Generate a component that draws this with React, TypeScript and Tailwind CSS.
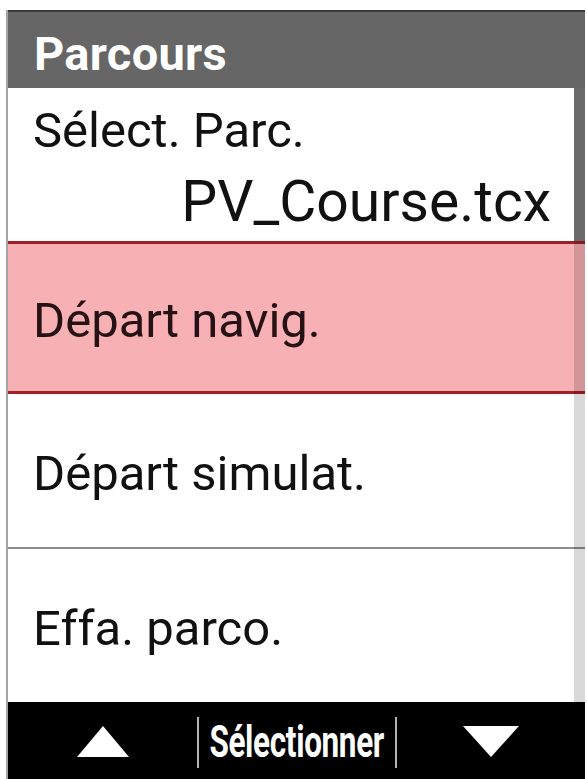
import React from 'react'

const items = [
  { label: 'Départ navig.', active: true },
  { label: 'Départ simulat.', active: false },
]

function Arrow({ down = false }: { down?: boolean }) {
  return (
    <svg width="56" height="31" viewBox="0 0 56 31" className="block">
      {down ? (
        <polygon points="0,0 56,0 28,31" fill="white" />
      ) : (
        <polygon points="2,31 54,31 28,0" fill="white" />
      )}
    </svg>
  )
}

export default function App() {
  return (
    <div className="w-[587px] h-[779px] bg-white pt-[10px] pl-[6px] pr-[2px] font-['Roboto','Liberation_Sans',sans-serif] overflow-hidden">
      <div className="h-full flex flex-col border-l-2 border-[#a5a5a5]">
        {/* header */}
        <div className="h-[78px] shrink-0 bg-[#666666] border-t-2 border-[#3a3a3a] flex items-center pl-[26px] pt-[6px]">
          <span className="text-white font-bold text-[47px] leading-none tracking-[0.3px]">Parcours</span>
        </div>

        {/* list */}
        <div className="relative flex flex-col">
          <div className="h-[153px] bg-white pt-[18px] pr-[34px] text-[#111111]">
            <div className="pl-[25px] text-[49px] leading-none">Sélect. Parc.</div>
            <div className="mt-[18px] text-right text-[57px] leading-none">PV_Course.tcx</div>
          </div>

          {items.map((it) => (
            <div
              key={it.label}
              className={
                it.active
                  ? 'h-[153px] flex items-center pl-[25px] pt-[6px] bg-[#f7b0b3] border-y-[3px] border-[#a11f25] text-[#261214]'
                  : 'h-[153px] flex items-center pl-[25px] pt-[6px] bg-white text-[#111111]'
              }
            >
              <span className="text-[49px] leading-none">{it.label}</span>
            </div>
          ))}

          <div className="h-[2px] bg-[#8c8c8c]" />

          <div className="h-[153px] flex items-center pl-[25px] pt-[6px] bg-white text-[#111111]">
            <span className="text-[49px] leading-none">Effa. parco.</span>
          </div>

          {/* scrollbar */}
          <div className="absolute right-0 top-0 bottom-0 w-[11px] bg-black/15">
            <div className="h-[153px] bg-[#6a6a6a]" />
          </div>
        </div>

        {/* footer */}
        <div className="h-[77px] shrink-0 bg-black flex items-center">
          <div className="w-[189px] flex justify-center pt-[2px]">
            <Arrow />
          </div>
          <div className="w-[2px] h-[51px] bg-[#b5b5b5] mt-[3px]" />
          <div className="w-[196px] flex justify-center">
            <span className="inline-block scale-x-70 text-white font-bold text-[45px] leading-none tracking-[-0.5px] pt-[2px]">
              Sélectionner
            </span>
          </div>
          <div className="w-[2px] h-[51px] bg-[#b5b5b5] mt-[3px]" />
          <div className="flex-1 flex justify-center pt-[2px]">
            <Arrow down />
          </div>
        </div>
      </div>
    </div>
  )
}
